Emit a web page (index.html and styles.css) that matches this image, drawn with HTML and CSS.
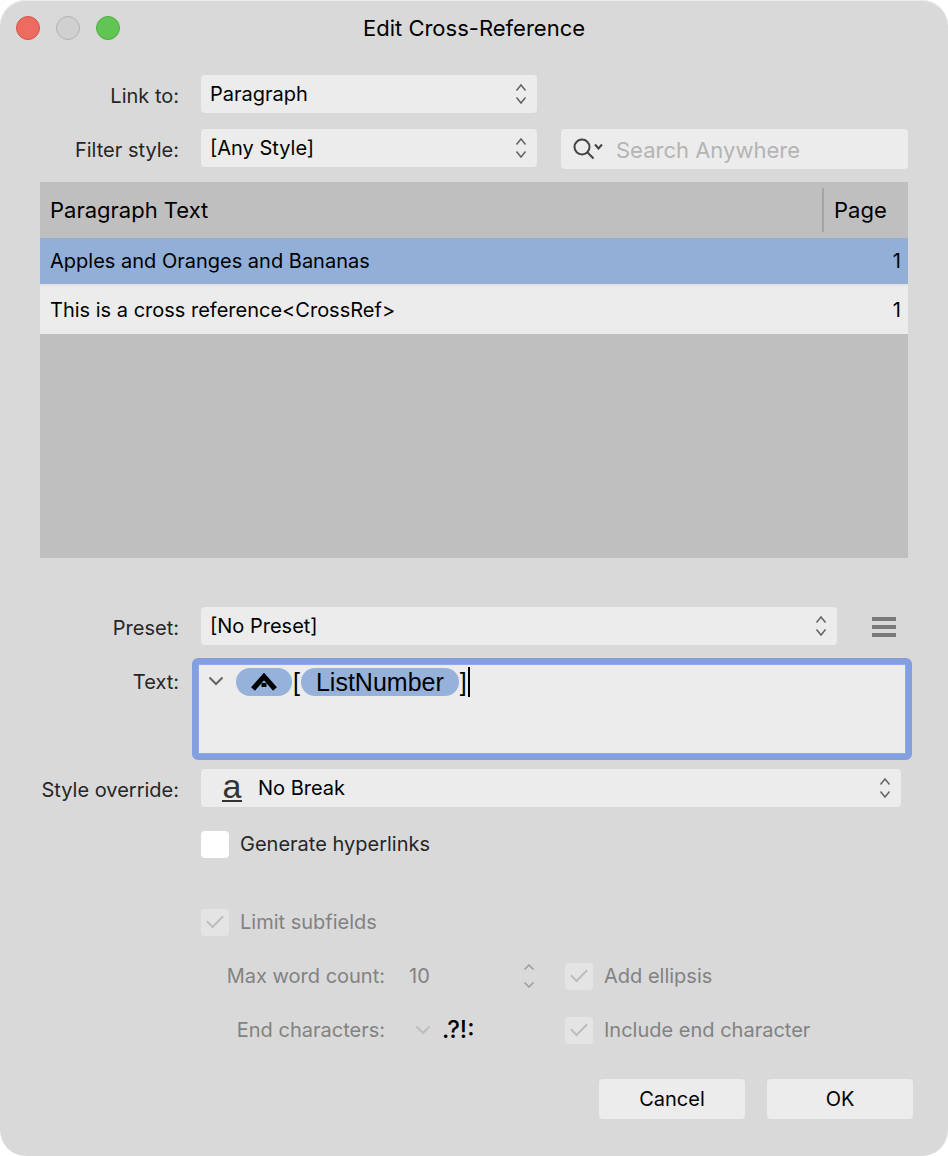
FILE: index.html
```html
<!DOCTYPE html>
<html lang="en">
<head>
<meta charset="utf-8">
<meta name="viewport" content="width=device-width, initial-scale=1">
<title>Edit Cross-Reference</title>
<link rel="stylesheet" href="styles.css">
</head>
<body>
<svg class="defs" aria-hidden="true">
  <symbol id="updown" viewBox="0 0 12 22"><path d="M1.500 7.500 6 2l4.500 5.500M1.500 14.500 6 20l4.500-5.500"/></symbol>
  <symbol id="chevron" viewBox="0 0 16 10"><path d="M1.500 1.500 8 8l6.500-6.500"/></symbol>
</svg>
<form class="dialog" role="dialog" aria-labelledby="title">
  <header class="titlebar">
    <div class="lights">
      <button type="button" class="light light-close" aria-label="Close"></button>
      <button type="button" class="light light-min" aria-label="Minimize" disabled></button>
      <button type="button" class="light light-zoom" aria-label="Zoom"></button>
    </div>
    <h1 class="title" id="title">Edit Cross-Reference</h1>
  </header>

  <div class="row">
    <label class="label" for="link-to">Link to:</label>
    <div class="fields">
      <div class="select select-short">
        <select id="link-to"><option>Paragraph</option></select>
        <svg class="updown"><use href="#updown"/></svg>
      </div>
    </div>
  </div>
  <div class="row row-filter">
    <label class="label" for="filter">Filter style:</label>
    <div class="fields">
      <div class="select select-short">
        <select id="filter"><option>[Any Style]</option></select>
        <svg class="updown"><use href="#updown"/></svg>
      </div>
      <div class="search">
        <svg class="search-icon" viewBox="0 0 30 22"><circle cx="9" cy="9" r="7.500"/><path d="M14.300 14.300 20.500 20.500"/><path d="M22 6.500 25.500 10.500 29 6.500"/></svg>
        <input type="search" placeholder="Search Anywhere" aria-label="Search Anywhere">
      </div>
    </div>
  </div>

  <div class="list">
    <table>
      <thead><tr><th>Paragraph Text</th><th class="page-col"><span class="page-head">Page</span></th></tr></thead>
      <tbody>
        <tr class="selected"><td>Apples and Oranges and Bananas</td><td class="num">1</td></tr>
        <tr><td>This is a cross reference&lt;CrossRef&gt;</td><td class="num">1</td></tr>
      </tbody>
    </table>
  </div>

  <div class="row">
    <label class="label" for="preset">Preset:</label>
    <div class="fields fields-preset">
      <div class="select">
        <select id="preset"><option>[No Preset]</option></select>
        <svg class="updown"><use href="#updown"/></svg>
      </div>
      <button type="button" class="menu" aria-label="Preset menu"><svg viewBox="0 0 24 20"><path d="M0 2h24M0 10h24M0 18h24"/></svg></button>
    </div>
  </div>
  <div class="row row-text">
    <span class="label label-text" id="text-label">Text:</span>
    <div class="editor">
      <button type="button" class="expand" aria-label="Insert field"><svg viewBox="0 0 16 10"><use href="#chevron"/></svg></button>
      <div class="editor-text" role="textbox" aria-labelledby="text-label" contenteditable="true" spellcheck="false"><span class="token token-icon"><svg viewBox="0 0 26 18"><path d="M2 16 13 3.500 24 16"/><rect x="10.500" y="10" width="5" height="4"/></svg></span><span class="bracket">[</span><span class="token">ListNumber</span><span class="bracket">]</span><span class="caret"></span></div>
    </div>
  </div>
  <div class="row">
    <label class="label" for="override">Style override:</label>
    <div class="fields fields-override">
      <div class="select select-icon">
        <span class="char-icon" aria-hidden="true">a</span>
        <select id="override"><option>No Break</option></select>
        <svg class="updown"><use href="#updown"/></svg>
      </div>
    </div>
  </div>

  <div class="options">
    <label class="check"><input type="checkbox"><span>Generate hyperlinks</span></label>
    <label class="check check-limit"><input type="checkbox" checked disabled><span>Limit subfields</span></label>
    <div class="sub">
      <label class="sub-label" for="max">Max word count:</label>
      <div class="stepper"><input id="max" type="text" inputmode="numeric" value="10" disabled><svg class="steps" viewBox="0 0 12 26"><path d="M1.500 6.500 6 2l4.500 4.500M1.500 19.500 6 24l4.500-4.500"/></svg></div>
      <label class="check"><input type="checkbox" checked disabled><span>Add ellipsis</span></label>
      <label class="sub-label" for="ends">End characters:</label>
      <div class="ends"><svg class="ends-icon" viewBox="0 0 16 10"><use href="#chevron"/></svg><input id="ends" type="text" value=".?!:" disabled></div>
      <label class="check"><input type="checkbox" checked disabled><span>Include end character</span></label>
    </div>
  </div>

  <footer class="actions">
    <button type="button">Cancel</button>
    <button type="submit">OK</button>
  </footer>
</form>
</body>
</html>
```
FILE: styles.css
```css
* { box-sizing: border-box; }
body {
  margin: 0;
  background: #fff;
  color: #000;
  font: 20px/28px Inter, "Liberation Sans", sans-serif;
}
.defs { display: none; }
svg { fill: none; stroke: #636363; stroke-width: 2; }
input, select, button {
  appearance: none;
  margin: 0;
  padding: 0;
  border: 0;
  background: none;
  color: inherit;
  font: inherit;
  opacity: 1;
}
.dialog {
  padding: 0 40px 37px;
  border-radius: 26px;
  background: #d9d9d9;
  box-shadow: inset 0 1px #ececec;
}
.titlebar {
  display: grid;
  grid-template-columns: 1fr auto 1fr;
  align-items: center;
  height: 56px;
  margin: 0 -24px 19px;
}
.lights { display: flex; gap: 16px; }
.light {
  width: 24px;
  height: 24px;
  border: 1px solid #b1b1b1;
  border-radius: 50%;
  background: #d0d0d0;
}
.light-close { border-color: #d5554a; background: #ed6b5f; }
.light-zoom { border-color: #52ab44; background: #61c554; }
.title { margin: 0; font-size: 22px; font-weight: 400; }

.row {
  display: grid;
  grid-template-columns: 139px 1fr;
  column-gap: 22px;
}
.row-filter { margin-top: 12px; }
.label { color: #262626; line-height: 42px; text-align: right; white-space: nowrap; }
.fields { display: flex; align-items: flex-start; gap: 24px; }
.fields-preset { gap: 35px; padding-right: 12px; }
.fields-override { padding-right: 7px; }
.select {
  position: relative;
  display: flex;
  flex: 1;
  height: 38px;
  border-radius: 4px;
  background: #ececec;
}
.select-short { flex: 0 1 336px; }
.select select { width: 100%; padding: 0 36px 0 9px; }
.select-icon select { padding-left: 57px; }
.updown {
  position: absolute;
  top: 8px;
  right: 10px;
  width: 12px;
  height: 22px;
  pointer-events: none;
  stroke-width: 1.5;
}
.char-icon {
  position: absolute;
  top: 2px;
  left: 21px;
  width: 20px;
  height: 31px;
  border-bottom: 2px solid #333;
  color: #333;
  font-family: "Liberation Sans", Arial, sans-serif;
  font-size: 34px;
  line-height: 30px;
  text-align: center;
  pointer-events: none;
}
.search {
  display: flex;
  flex: 1 1 0;
  align-items: center;
  min-width: 0;
  height: 40px;
  padding: 0 12px;
  border-radius: 4px;
  background: #ececec;
}
.search-icon { flex: none; width: 30px; height: 22px; margin-right: 13px; stroke: #444; }
.search input { flex: 1; min-width: 0; height: 40px; padding-top: 2px; font-size: 22px; }
.search input::placeholder { color: #b4b4b4; opacity: 1; }

.list { min-height: 376px; margin: 11px 0 49px; background: #bfbfbf; }
table { width: 100%; border-spacing: 0; }
th, td { padding: 0 6px 0 10px; font-weight: 400; text-align: left; }
th { height: 56px; font-size: 22px; }
td { height: 48px; background: #ececec; }
.selected td { border-bottom: 2px solid #e2e2e5; background: #92afd7; }
.page-col { width: 86px; padding: 0; }
.page-head { display: block; padding-left: 10px; border-left: 2px solid #a5a5a5; line-height: 44px; }
td.num { padding-right: 7px; text-align: right; }

.menu { height: 40px; }
.menu svg { display: block; width: 24px; height: 20px; stroke: #7a7a7a; stroke-width: 4; }
.row-text { margin: 9px 0; }
.label-text { line-height: 48px; }
.editor {
  display: flex;
  align-items: flex-start;
  min-height: 102px;
  margin: 0 -4px 0 -9px;
  padding: 3px 10px;
  border: 6px solid #839fe0;
  border-radius: 6px;
  background: #ececec;
  box-shadow: inset 0 0 0 1px #8ea9ee;
}
.expand { height: 28px; margin-right: 12px; }
.expand svg, .ends-icon { display: block; width: 16px; height: 10px; }
.editor-text {
  display: flex;
  flex: 1;
  align-items: center;
  height: 30px;
  outline: 0;
  font-family: "Liberation Sans", Arial, sans-serif;
  font-size: 25px;
}
.token {
  height: 28px;
  padding: 0 15px;
  border-radius: 14px;
  background: #96b2da;
  line-height: 28px;
}
.token-icon { display: flex; align-items: center; }
.token-icon svg { width: 26px; height: 18px; stroke: #000; stroke-width: 5; }
.token-icon rect { fill: #000; stroke: none; }
.bracket { padding: 0 1px; }
.caret { width: 2px; height: 30px; background: #000; }

.options { padding: 19px 0 35px 161px; }
.check { display: flex; align-items: center; gap: 11px; height: 28px; color: #262626; }
.check:has(:disabled), .sub-label, .stepper { color: #828282; }
.check input { width: 28px; height: 27px; border-radius: 4px; background: #fff; }
.check input:disabled {
  display: grid;
  place-items: center;
  background: #e4e4e4;
}
.check input:disabled::before {
  width: 14px;
  height: 7px;
  margin-bottom: 5px;
  border: solid #bcbcbc;
  border-width: 0 0 2px 2px;
  content: "";
  transform: rotate(-45deg);
}
.check-limit { margin: 50px 0 26px; }
.sub {
  display: grid;
  grid-template-columns: 184px 132px 1fr;
  gap: 26px 24px;
  align-items: center;
}
.sub-label { text-align: right; white-space: nowrap; }
.stepper { display: flex; align-items: center; }
.stepper input { flex: 1; min-width: 0; }
.steps { width: 12px; height: 26px; margin-right: 6px; stroke: #999; stroke-width: 1.5; }
.ends { display: flex; align-items: center; gap: 11px; padding-left: 6px; }
.ends-icon { flex: none; stroke: #bebebe; }
.ends input { flex: 1; min-width: 0; color: #000; font-size: 24px; font-weight: 500; }

.actions { display: flex; justify-content: flex-end; gap: 22px; margin-right: -5px; }
.actions button { width: 146px; height: 40px; border-radius: 4px; background: #ececec; }
```
